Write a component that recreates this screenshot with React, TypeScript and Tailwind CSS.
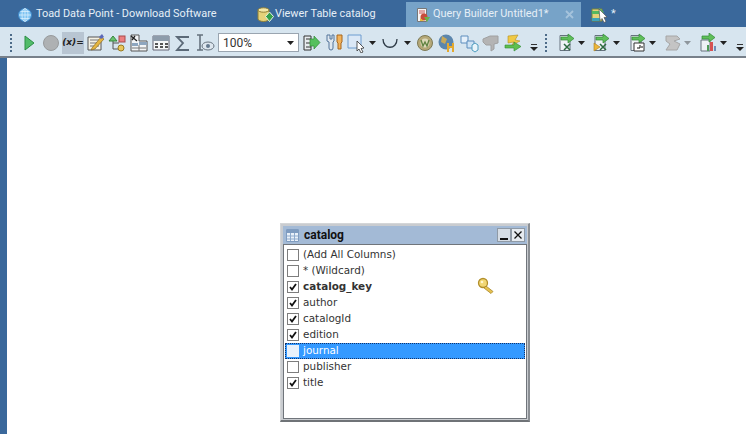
import React from 'react';

const font = 'font-["DejaVu_Sans",sans-serif]';
const uiFont = 'font-["Roboto",sans-serif]';

const Grip = ({ className = '' }: { className?: string }) => (
  <div className={`flex flex-col gap-[2px] ${className}`}>
    {[0, 1, 2, 3, 4].map((i) => (
      <span key={i} className="w-[2px] h-[2px] bg-[#4d6b88]" />
    ))}
  </div>
);

const Caret = ({ className = '' }: { className?: string }) => (
  <svg width="7" height="4" viewBox="0 0 7 4" className={className}>
    <path d="M0 0h7L3.5 4z" fill="#222" />
  </svg>
);

const Overflow = ({ className = '' }: { className?: string }) => (
  <svg width="8" height="8" viewBox="0 0 8 8" className={className}>
    <path d="M1 1h6v1H1z" fill="#333" />
    <path d="M0 4h8L4 8z" fill="#222" />
  </svg>
);

const Ic = ({ w = 22, children }: { w?: number; children: React.ReactNode }) => (
  <svg width={w} height="20" viewBox="0 0 22 20" className="shrink-0">
    {children}
  </svg>
);

const Green = ({ x = 0, y = 0 }: { x?: number; y?: number }) => (
  <g transform={`translate(${x} ${y})`}>
    <path d="M3 3h7V0l6 4.500-6 4.500V6H3z" fill="#5fbf5a" stroke="#2f8a34" strokeWidth=".7" />
  </g>
);

const DocBase = () => <path d="M5 2.500h10v15H5z" fill="#eef2f6" stroke="#66727e" />;

const StackIcon = ({ children }: { children?: React.ReactNode }) => (
  <Ic>
    <DocBase />
    <Green x={3} y={1} />
    {children}
  </Ic>
);

const Toolbar = () => (
  <div className="h-[31px] shrink-0 flex items-center bg-[#d7e5ef] pl-[10px] pt-[2px] border-b-2 border-[#77808a]">
    <Grip />
    <div className="ml-[10px] w-[15px] flex justify-center">
      <svg width="11" height="16" viewBox="0 0 11 16">
        <path d="M1 1l9 7-9 7z" fill="#52bc6a" stroke="#2b8f45" />
      </svg>
    </div>
    <div className="ml-[6px] w-[16px] h-[16px] rounded-full bg-[#aeb1b3] border border-[#979a9c]" />
    <div className="ml-[3px] w-[22px] h-[22px] bg-[#b8c5d2] flex items-center justify-center text-[9px] italic font-semibold text-[#222]">
      (x)=
    </div>
    <Ic>
      <path d="M4 4h13v13H4z" fill="#f4f1e4" stroke="#555" />
      <path d="M6 7h9M6 10h9M6 13h9" stroke="#777" />
      <path d="M8 15l9-11 3 2-9 10-4 1z" fill="#e5b53f" stroke="#805f18" strokeWidth=".6" />
      <path d="M15 4l3-3 2 3-3 2z" fill="#5c68b8" />
    </Ic>
    <Ic>
      <path d="M7 8v8h5M7 10h6" fill="none" stroke="#555" />
      <path d="M7 3l4 5H3z" fill="#69c36f" stroke="#37853d" />
      <rect x="13" y="3" width="6" height="6" fill="#ec7f80" stroke="#a84a4b" />
      <circle cx="15" cy="15" r="3" fill="#e9c659" stroke="#9a7b22" />
    </Ic>
    <Ic>
      <path d="M3 2h8v6h8v10H3z" fill="#f3f5f7" stroke="#555" />
      <path d="M11 9h8v3h-8zM4 10h6v3H4z" fill="#8ea6bf" />
      <path d="M4 15h14M11 12v6" stroke="#777" />
      <path d="M3 3l6 5M4 7l3-4" stroke="#222" strokeWidth="1.300" />
    </Ic>
    <Ic>
      <path d="M3 3h16v14H3z" fill="#f4f6f8" stroke="#667" />
      <path d="M3 3h16v5H3z" fill="#8e9cab" />
      <path d="M5 11h3M10 11h3M15 11h3M5 14h3M10 14h3M15 14h3" stroke="#555" strokeWidth="2" />
    </Ic>
    <Ic>
      <path d="M17 4H5l6 6-6 7h12" fill="none" stroke="#5c6a78" strokeWidth="1.800" />
    </Ic>
    <Ic>
      <path d="M3 2h6M6 2v15M3 17h6" fill="none" stroke="#66727e" strokeWidth="1.600" />
      <ellipse cx="14" cy="13" rx="6" ry="4" fill="#dde6ee" stroke="#66727e" />
      <circle cx="14" cy="13" r="2" fill="#64798e" />
    </Ic>
    <div className={`ml-[2px] w-[81px] h-[19px] bg-white border border-[#9aa5b0] flex items-center justify-between pl-[4px] pr-[4px] text-[12px] text-[#333] ${uiFont}`}>
      100%
      <Caret />
    </div>
    <div className="ml-[1px] flex items-center">
      <Ic>
        <path d="M4 3h7v14H4z" fill="#e7ecef" stroke="#333" />
        <path d="M6 6h5M6 10h5M6 14h5" stroke="#333" />
        <path d="M10 6h4V3l6 6.500-6 6.500v-3h-4z" fill="#55c05e" stroke="#2f8a34" strokeWidth=".7" />
      </Ic>
      <Ic w={24}>
        <path d="M5 2h2v4h2V2h2v6l-1 1v6a2 2 0 01-4 0V9L4 8V2z" fill="#dfe7ef" stroke="#53749a" />
        <path d="M14 2h5v7l-1 1v6h-3v-6l-1-1z" fill="#f2b25a" stroke="#a8661d" />
      </Ic>
      <Ic>
        <path d="M2 2h13v13H2z" fill="#dbe8f6" stroke="#6d9cd0" />
        <path d="M11 8l7 7-3 .500 2 3.500-2 1-2-4-2 2z" fill="#fff" stroke="#333" strokeWidth=".8" />
      </Ic>
      <Caret className="ml-[1px]" />
      <svg width="18" height="12" viewBox="0 0 18 12" className="ml-[5px]">
        <path d="M2 2c0 11 14 11 14 0" fill="none" stroke="#2d3a46" strokeWidth="1.300" />
      </svg>
      <Caret className="ml-[5px]" />
      <div className="ml-[3px] flex items-center">
        <Ic>
          <circle cx="11" cy="10" r="7.500" fill="#b5a878" stroke="#7d7a55" />
          <circle cx="11" cy="10" r="4.500" fill="#dcd8b8" />
          <path d="M7 7l2 6 2-4 2 4 2-6" fill="none" stroke="#5f8240" strokeWidth="1.300" />
        </Ic>
        <Ic>
          <circle cx="10" cy="9" r="7.500" fill="#5b86ad" />
          <path d="M6 3l5 3-2 5-4-2z" fill="#c7a95a" />
          <path d="M11 10h2v3h3v-3h2v9h-2v-4h-3v4h-2z" fill="#e4a92f" />
        </Ic>
        <Ic>
          <path d="M3 3h7v7H3z" fill="#e5f0fa" stroke="#5d8dbd" />
          <path d="M9 8h7v7H9z" fill="#cfe3f4" stroke="#5d8dbd" />
          <path d="M14 12l3-2 3 2v5l-3 2-3-2z" fill="#e9f5fb" stroke="#4e9dbf" />
        </Ic>
        <Ic>
          <path d="M3 6l7-3h8v7l-4 1v5l-3 2v-6H6L3 9z" fill="#b4b4b4" stroke="#a0a0a0" />
        </Ic>
        <Ic>
          <path d="M6 3l10-1-3 5 5 1-8 4 2-3-6 1z" fill="#f0c945" stroke="#b18e20" strokeWidth=".6" />
          <path d="M3 12h9V9l7 4.500-7 4.500v-3H3z" fill="#5fc04f" stroke="#2f8a34" strokeWidth=".6" />
        </Ic>
      </div>
      <Overflow className="ml-[6px] mt-[9px]" />
      <Grip className="ml-[7px]" />
      <div className="ml-[8px] flex items-center">
        <StackIcon>
          <path d="M9 11l6 6M15 11l-6 6" stroke="#2c6a3f" strokeWidth="1.500" />
        </StackIcon>
        <Caret className="ml-[1px]" />
      </div>
      <div className="ml-[5px] flex items-center">
        <StackIcon>
          <path d="M4 10l6 4-6 4z" fill="#edb63a" stroke="#a97c1a" strokeWidth=".6" />
          <path d="M10 11l6 6M16 11l-6 6" stroke="#2c6a3f" strokeWidth="1.500" />
        </StackIcon>
        <Caret className="ml-[1px]" />
      </div>
      <div className="ml-[6px] flex items-center">
        <StackIcon>
          <path d="M8 10h10v8H8z" fill="#fff" stroke="#333" />
          <path d="M11 15h3v-3M16 13v2" fill="none" stroke="#111" />
        </StackIcon>
        <Caret className="ml-[1px]" />
      </div>
      <div className="ml-[5px] flex items-center">
        <Ic>
          <path d="M5 3h11l3 3-6 2 6 3-3 6H5l4-6-4-3z" fill="#c4c4c4" stroke="#a6a6a6" />
        </Ic>
        <Caret className="ml-[1px] opacity-40" />
      </div>
      <div className="ml-[6px] flex items-center">
        <Ic>
          <path d="M4 7h9v11H4z" fill="#eef2f6" stroke="#66727e" />
          <Green x={2} y={0} />
          <path d="M10 12h2v6h-2z" fill="#4f9b58" />
          <path d="M13 9h3v9h-3z" fill="#d65252" />
          <path d="M17 13h2v5h-2z" fill="#6f8fb8" />
        </Ic>
        <Caret className="ml-[1px]" />
      </div>
      <Overflow className="ml-[9px] mt-[9px]" />
    </div>
  </div>
);

const columns = [
  { name: '(Add All Columns)', checked: false },
  { name: '* (Wildcard)', checked: false },
  { name: 'catalog_key', checked: true, bold: true },
  { name: 'author', checked: true },
  { name: 'catalogId', checked: true },
  { name: 'edition', checked: true },
  { name: 'journal', checked: false, selected: true },
  { name: 'publisher', checked: false },
  { name: 'title', checked: true },
];

const TableWindow = () => (
  <div className={`absolute left-[280px] top-[165px] w-[250px] h-[199px] bg-[#c9ccd0] border-t border-l border-[#d4d6d8] border-r-[2px] border-r-[#8b8f94] border-b-[2px] border-b-[#6f7377] pl-[2px] pr-[1px] pt-[2px] ${font}`}>
    <div className="h-[18px] bg-[#a3bad6] flex items-center pl-[3px] pr-[2px]">
      <svg width="13" height="13" viewBox="0 0 13 13">
        <path d="M.5.5h12v12H.5z" fill="#eaf1f9" stroke="#7f9cc0" />
        <path d="M1 1h11v3H1z" fill="#7f9cc0" />
        <path d="M1 7h11M1 10h11M4.500 4v8M8.500 4v8" stroke="#8fabcd" />
      </svg>
      <span className={`ml-[5px] text-[12px] font-bold text-[#111] ${uiFont}`}>catalog</span>
      <div className="ml-auto flex">
        <div className="w-[14px] h-[14px] bg-[#d6dde5] border border-[#8f9aa6] flex items-end justify-center pb-[1px]">
          <span className="w-[8px] h-[2px] bg-[#111]" />
        </div>
        <div className="w-[14px] h-[14px] bg-[#e6ebf0] border border-[#8f9aa6] flex items-center justify-center">
          <svg width="8" height="8" viewBox="0 0 8 8">
            <path d="M.5.5l7 7M7.500.5l-7 7" stroke="#111" strokeWidth="1.300" />
          </svg>
        </div>
      </div>
    </div>
    <div className="relative h-[175px] bg-white border border-[#70757b] pt-[2px] pl-[1px] pr-[1px]">
      {columns.map((c) => (
        <div
          key={c.name}
          className={`h-[16px] flex items-center pl-[2px] text-[10.4px] ${
            c.selected ? 'bg-[#3399ff] text-white outline-1 outline-dotted outline-[#14346a] -outline-offset-1' : 'text-[#333]'
          } ${c.bold ? 'font-bold text-[#111]' : ''}`}
        >
          <span className={`w-[12px] h-[12px] shrink-0 border flex items-center justify-center ${c.selected ? 'bg-[#e8f1fb] border-[#e8f1fb]' : 'bg-white border-[#7d7d7d]'}`}>
            {c.checked && (
              <svg width="8" height="8" viewBox="0 0 8 8">
                <path d="M1 4l2 2.500L7 1" fill="none" stroke="#111" strokeWidth="1.800" />
              </svg>
            )}
          </span>
          <span className="ml-[4px]">{c.name}</span>
        </div>
      ))}
      <svg width="18" height="18" viewBox="0 0 18 18" className="absolute left-[193px] top-[32px]">
        <circle cx="6" cy="6" r="4.500" fill="#f2d774" stroke="#b28f2b" strokeWidth="1.300" />
        <circle cx="5" cy="5" r="1.300" fill="#fff6cf" />
        <path d="M9 9l7 5.500-2 2-7-5.500z" fill="#e7c24f" stroke="#a8862a" strokeWidth=".8" />
      </svg>
    </div>
  </div>
);

export default function App() {
  return (
    <div className={`w-[746px] h-[434px] flex flex-col overflow-hidden bg-[#3a6a9d] ${font}`}>
      <div className={`h-[27px] shrink-0 flex items-end bg-[#3a689b] text-[10.9px] text-[#e6eff7] whitespace-nowrap ${uiFont}`}>
        <div className="h-[25px] w-[246px] flex items-center pl-[18px]">
          <svg width="14" height="14" viewBox="0 0 14 14" className="shrink-0">
            <circle cx="7" cy="7" r="6.500" fill="#7ec3f2" stroke="#3f88c8" />
            <path d="M1 7h12M7 .5v13M2.500 3.500h9M2.500 10.500h9" stroke="#d8effc" strokeWidth=".8" />
            <ellipse cx="7" cy="7" rx="3" ry="6.500" fill="none" stroke="#d8effc" strokeWidth=".8" />
          </svg>
          <span className="ml-[4px]">Toad Data Point - Download Software</span>
        </div>
        <div className="h-[25px] w-[160px] flex items-center pl-[11px]">
          <svg width="18" height="16" viewBox="0 0 18 16" className="shrink-0">
            <path d="M1 3v9c0 1.500 3 2.500 5.500 2.500S12 13.500 12 12V3z" fill="#e5d27a" stroke="#8f7e35" />
            <ellipse cx="6.500" cy="3" rx="5.500" ry="2.200" fill="#f3e8a8" stroke="#8f7e35" />
            <path d="M12.500 5l4 4.500-4 5-4-5z" fill="#35a04a" stroke="#e9f5e9" />
          </svg>
          <span>Viewer Table catalog</span>
        </div>
        <div className="h-[25px] w-[175px] bg-[#77a3c8] flex items-center pl-[9px]">
          <svg width="16" height="16" viewBox="0 0 16 16" className="shrink-0">
            <path d="M2.500 1.500h9v13h-9z" fill="#f5f5f5" stroke="#777" />
            <path d="M4 4h6M4 6h6" stroke="#c55" />
            <circle cx="9" cy="10" r="3.500" fill="#c84b3c" />
            <path d="M9 10h6l-3 5z" fill="#6ab04a" />
            <path d="M5 11l4 3H5z" fill="#e7b93c" />
          </svg>
          <span className="ml-[2px]">Query Builder Untitled1*</span>
          <svg width="9" height="9" viewBox="0 0 9 9" className="ml-auto mr-[7px] shrink-0">
            <path d="M1 1l7 7M8 1L1 8" stroke="#a5c3dc" strokeWidth="1.800" />
          </svg>
        </div>
        <div className="h-[25px] flex items-center pl-[10px]">
          <svg width="18" height="18" viewBox="0 0 18 18" className="shrink-0">
            <path d="M1 3h10v12H1z" fill="#e5d27a" stroke="#76833e" />
            <path d="M1 5h7V2l5 4-5 4V8H1z" fill="#55b860" />
            <path d="M1 12h8v3H1z" fill="#3ea3b8" />
            <path d="M8 3l8 8-3 .500 2 4-2 1-2-4-2 2z" fill="#fff" stroke="#555" strokeWidth=".7" />
          </svg>
          <span className="ml-[2px]">*</span>
        </div>
      </div>
      <Toolbar />
      <div className="relative flex-1 flex min-h-0">
        <div className="w-[7px] shrink-0 bg-[#3a689b]" />
        <div className="flex-1 bg-white" />
        <TableWindow />
      </div>
    </div>
  );
}
